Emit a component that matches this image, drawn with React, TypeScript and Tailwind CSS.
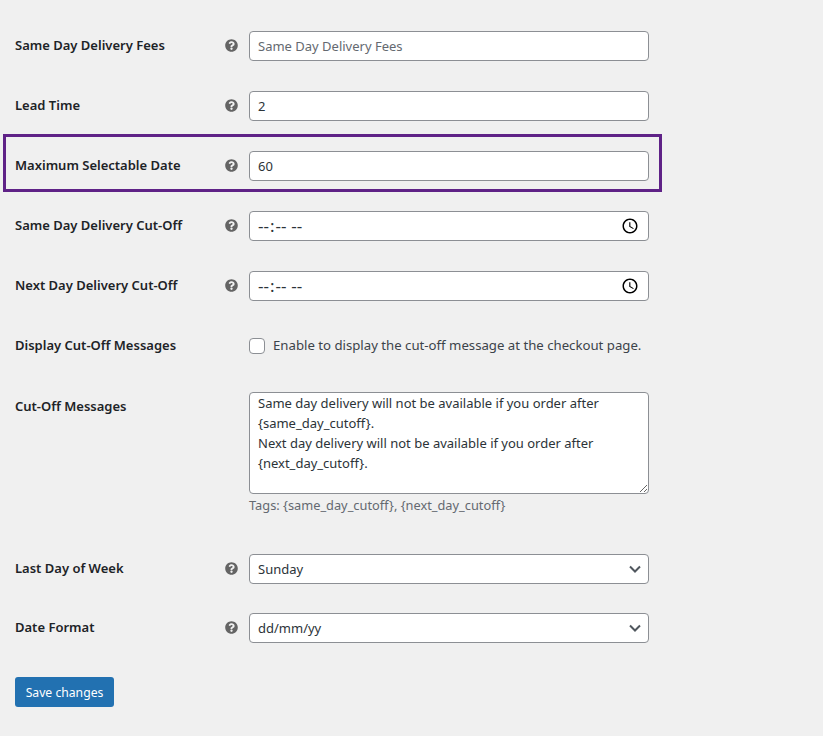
import { FaQuestionCircle } from 'react-icons/fa';

const fontStack = "font-['Noto_Sans','Open_Sans',sans-serif]";
const fieldClass =
  'block w-[400px] h-[30px] rounded-[4px] border border-[#8c8f94] bg-white px-2 text-[13px] text-[#2c3338] outline-none';
const timeClass =
  'block w-[400px] h-[30px] rounded-[4px] border border-[#8c8f94] bg-white pl-[7px] pr-[6px] text-[17px] text-[#2c3338] outline-none';

function HelpIcon() {
  return (
    <span className="flex w-[24px] shrink-0 items-center pb-[2px]">
      <FaQuestionCircle className="text-[13px] text-[#646464]" />
    </span>
  );
}

function Label({ text }: { text: string }) {
  return <label className="block w-[210px] shrink-0 text-[13px] font-semibold text-[#1d2327]">{text}</label>;
}

function Chevron() {
  return (
    <svg className="pointer-events-none absolute right-[8px] top-[11px]" width="12" height="9" viewBox="0 0 12 9" fill="none">
      <path d="M1 1.5l5 5 5-5" stroke="#50575e" strokeWidth="2" />
    </svg>
  );
}

function SelectField({ value, options }: { value: string; options: string[] }) {
  return (
    <div className="relative">
      <select
        defaultValue={value}
        className="block h-[30px] w-[400px] appearance-none rounded-[4px] border border-[#8c8f94] bg-white px-2 pt-[1px] text-[13px] text-[#2c3338] outline-none"
      >
        {options.map(o => (
          <option key={o}>{o}</option>
        ))}
      </select>
      <Chevron />
    </div>
  );
}

export default function App() {
  return (
    <div className={`${fontStack} min-h-[736px] w-full bg-[#f0f0f0] pl-[15px] pt-[31px]`}>
      <form>
        <div className="flex h-[30px] items-center">
          <Label text="Same Day Delivery Fees" />
          <HelpIcon />
          <input className={`${fieldClass} placeholder:text-[#646970]`} placeholder="Same Day Delivery Fees" />
        </div>

        <div className="mt-[30px] flex h-[30px] items-center">
          <Label text="Lead Time" />
          <HelpIcon />
          <input className={fieldClass} defaultValue="2" />
        </div>

        {/* highlighted row */}
        <div className="ml-[-12px] mt-[13px] w-[659px] border-[3px] border-[#5f2287] pb-[8px] pl-[9px] pt-[14px]">
          <div className="flex h-[30px] items-center">
            <Label text="Maximum Selectable Date" />
            <HelpIcon />
            <input className={fieldClass} defaultValue="60" />
          </div>
        </div>

        <div className="mt-[19px] flex h-[30px] items-center">
          <Label text="Same Day Delivery Cut-Off" />
          <HelpIcon />
          <input type="time" className={timeClass} />
        </div>

        <div className="mt-[30px] flex h-[30px] items-center">
          <Label text="Next Day Delivery Cut-Off" />
          <HelpIcon />
          <input type="time" className={timeClass} />
        </div>

        <div className="mt-[36px] flex h-[17px] items-center">
          <Label text="Display Cut-Off Messages" />
          <span className="w-[24px] shrink-0" />
          <input type="checkbox" className="h-4 w-4 appearance-none rounded-[4px] border border-[#8c8f94] bg-white" />
          <span className="ml-2 pt-[1px] text-[13.2px] text-[#3c434a]">Enable to display the cut-off message at the checkout page.</span>
        </div>

        <div className="mt-[38px] flex items-start">
          <div className="pt-[5px]">
            <Label text="Cut-Off Messages" />
          </div>
          <span className="w-[24px] shrink-0" />
          <div>
            <textarea
              className="block h-[102px] w-[400px] rounded-[4px] border border-[#8c8f94] bg-white px-2 py-0 text-[13px] leading-[20px] text-[#2c3338] outline-none"
              defaultValue={
                'Same day delivery will not be available if you order after {same_day_cutoff}.\nNext day delivery will not be available if you order after {next_day_cutoff}.'
              }
            />
            <p className="mt-[2px] text-[12.8px] text-[#646970]">Tags: {'{same_day_cutoff}'}, {'{next_day_cutoff}'}</p>
          </div>
        </div>

        <div className="mt-[39px] flex h-[30px] items-center">
          <Label text="Last Day of Week" />
          <HelpIcon />
          <SelectField value="Sunday" options={['Sunday', 'Monday', 'Saturday']} />
        </div>

        <div className="mt-[29px] flex h-[30px] items-center">
          <Label text="Date Format" />
          <HelpIcon />
          <SelectField value="dd/mm/yy" options={['dd/mm/yy', 'mm/dd/yy']} />
        </div>

        <button
          type="button"
          className="mt-[34px] h-[30px] w-[99px] rounded-[3px] bg-[#2271b1] pt-[1px] text-[12.2px] text-white"
        >
          Save changes
        </button>
      </form>
    </div>
  );
}
